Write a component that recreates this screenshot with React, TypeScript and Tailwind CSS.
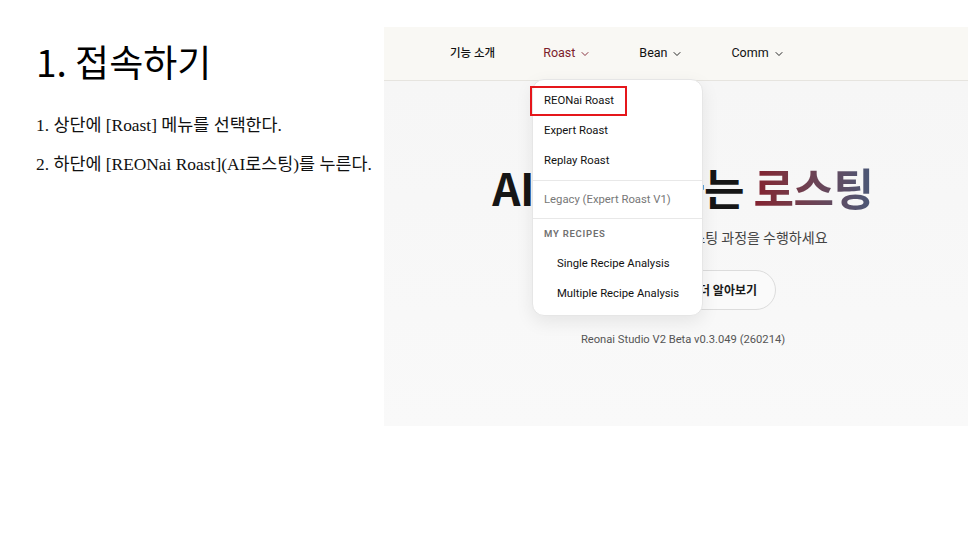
import { ChevronDown } from "lucide-react";

const navItems = [
  { label: "기능 소개", menu: false, active: false },
  { label: "Roast", menu: true, active: true },
  { label: "Bean", menu: true, active: false },
  { label: "Comm", menu: true, active: false },
];

const Nav = () => (
  <div className="h-[54px] shrink-0 bg-[#f9f8f4] border-b border-[#e6e4df] flex items-center pl-[66px] gap-[48px] font-['Roboto','Noto_Sans_CJK_KR',sans-serif] text-[12.5px]">
    {navItems.map((item) => (
      <div
        key={item.label}
        className={`flex items-center gap-[4px] ${item.active ? "text-[#7c1d2b]" : "text-[#111]"}`}
      >
        <span className={item.menu ? "" : "text-[11.5px] font-medium"}>{item.label}</span>
        {item.menu && <ChevronDown size={12} strokeWidth={1.8} />}
      </div>
    ))}
  </div>
);

const Dropdown = () => (
  <div className="absolute left-[148px] top-[52px] w-[171px] rounded-xl bg-white border border-[#e6e6e6] shadow-[0_6px_18px_rgba(0,0,0,0.08)] py-[6px] font-['Roboto',sans-serif] text-[11.3px] text-[#111]">
    <div className="relative">
      <div className="h-[30px] flex items-center pl-[11px]">REONai Roast</div>
      <div className="absolute -left-[3px] top-0 w-[97px] h-[30px] border-2 border-[#e5161b]" />
    </div>
    <div className="h-[30px] flex items-center pl-[11px]">Expert Roast</div>
    <div className="h-[30px] flex items-center pl-[11px]">Replay Roast</div>
    <div className="my-[4px] h-px bg-[#e8e8e8]" />
    <div className="h-[30px] flex items-center pl-[11px] text-[#777]">Legacy (Expert Roast V1)</div>
    <div className="mt-[3px] h-px bg-[#e8e8e8]" />
    <div className="h-[30px] flex items-center pl-[11px] text-[9.5px] font-semibold tracking-[0.08em] text-[#707070]">
      MY RECIPES
    </div>
    <div className="h-[30px] flex items-center pl-[24px]">Single Recipe Analysis</div>
    <div className="h-[30px] flex items-center pl-[24px]">Multiple Recipe Analysis</div>
  </div>
);

const Hero = () => (
  <div className="flex-1 bg-gradient-to-b from-[#f6f6f6] to-[#f9f9f9] flex flex-col items-center pt-[80px] pl-[14px]">
    <h1 className="text-[44px] leading-[52px] font-bold text-[#161616] font-['Noto_Sans_CJK_KR',sans-serif] tracking-[-0.01em]">
      AI가 함께하는{" "}
      <span className="bg-gradient-to-r from-[#83202f] to-[#485878] bg-clip-text text-transparent">로스팅</span>
    </h1>
    <p className="mt-[14px] text-[14px] leading-[21px] text-[#444] font-['Noto_Sans_CJK_KR',sans-serif]">
      AI 에이전트와 함께 쉽게 로스팅 과정을 수행하세요
    </p>
    <div className="mt-[22px] flex gap-[10px] font-['Noto_Sans_CJK_KR',sans-serif] text-[12px] font-semibold">
      <div className="h-[40px] px-[18px] rounded-full bg-[#7c1d2b] text-white flex items-center">시작하기</div>
      <div className="h-[40px] px-[18px] rounded-full border border-[#dcdcdc] bg-[#fafafa] text-[#1a1a1a] flex items-center">
        더 알아보기
      </div>
    </div>
    <p className="mt-[22px] text-[11.2px] leading-[16px] text-[#555] font-['Roboto',sans-serif]">
      Reonai Studio V2 Beta v0.3.049 (260214)
    </p>
  </div>
);

export default function App() {
  return (
    <div className="w-[980px] h-[551px] bg-white flex overflow-hidden">
      <div className="w-[384px] shrink-0 pl-[36px] pt-[39px]">
        <h2 className="text-[37px] leading-[44px] text-black font-['Noto_Sans_CJK_KR',sans-serif]">1. 접속하기</h2>
        <div className="mt-[30px] flex flex-col gap-[14px] text-[17.4px] leading-[25px] text-[#111] font-['Liberation_Serif','Noto_Sans_CJK_KR',serif]">
          <p>1. 상단에 [Roast] 메뉴를 선택한다.</p>
          <p>2. 하단에 [REONai Roast](AI로스팅)를 누른다.</p>
        </div>
      </div>
      <div className="pt-[27px]">
        <div className="relative w-[584px] h-[399px] flex flex-col">
          <Nav />
          <Hero />
          <Dropdown />
        </div>
      </div>
    </div>
  );
}
